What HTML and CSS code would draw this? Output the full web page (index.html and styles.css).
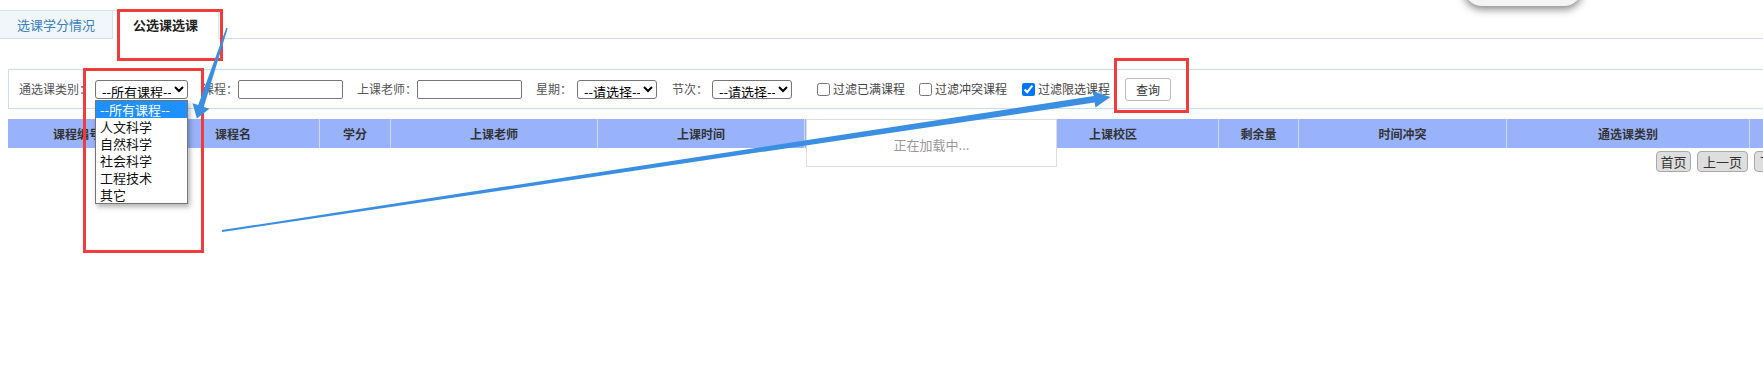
FILE: index.html
```html
<!DOCTYPE html>
<html lang="zh-CN">
<head>
<meta charset="utf-8">
<title>公选课选课</title>
<link rel="stylesheet" href="styles.css">
</head>
<body>
<div class="tabbar">
  <div class="tab">选课学分情况</div>
  <div class="tab active">公选课选课</div>
</div>

<div class="main">
  <div class="filter">
    <span class="lbl">通选课类别：</span>
    <span class="sel-wrap">
      <select class="sel sel-type"><option>--所有课程--</option></select>
      <ul class="dropdown">
        <li class="on">--所有课程--</li>
        <li>人文科学</li>
        <li>自然科学</li>
        <li>社会科学</li>
        <li>工程技术</li>
        <li>其它</li>
      </ul>
    </span>
    <span class="lbl lbl-course">课程：</span><input class="txt" type="text">
    <span class="lbl lbl-teacher">上课老师：</span><input class="txt" type="text">
    <span class="lbl lbl-week">星期：</span><select class="sel sel-sm sel-week"><option>--请选择--</option></select>
    <span class="lbl lbl-sec">节次：</span><select class="sel sel-sm sel-sec"><option>--请选择--</option></select>
    <label class="chk chk-1"><input type="checkbox">过滤已满课程</label>
    <label class="chk chk-2"><input type="checkbox">过滤冲突课程</label>
    <label class="chk chk-3"><input type="checkbox" checked>过滤限选课程</label>
    <button class="btn" type="button">查询</button>
  </div>

  <div class="grid-wrap">
    <div class="grid-head">
      <div class="th c1">课程编号</div>
      <div class="th c2">课程名</div>
      <div class="th c3">学分</div>
      <div class="th c4">上课老师</div>
      <div class="th c5">上课时间</div>
      <div class="th c6"></div>
      <div class="th c7">上课校区</div>
      <div class="th c8">剩余量</div>
      <div class="th c9">时间冲突</div>
      <div class="th c10">通选课类别</div>
      <div class="th c11">操作</div>
    </div>
    <div class="loading">正在加载中...</div>
  </div>

  <div class="pager">
    <button class="pbtn w2" type="button">首页</button>
    <button class="pbtn w3" type="button">上一页</button>
    <button class="pbtn w3" type="button">下一页</button>
    <button class="pbtn w2" type="button">尾页</button>
  </div>
</div>

<div class="float-widget"><span class="fw-circle"></span></div>

<div class="mark mark-1"></div>
<div class="mark mark-2"></div>
<div class="mark mark-3"></div>

<svg class="arrows" width="1763" height="389" viewBox="0 0 1763 389" xmlns="http://www.w3.org/2000/svg">
  <polygon fill="#3b8fe2" points="227.7,28.2 226.3,27.8 198.2,105.1 192.5,103.2 196.9,118.6 209.5,108.8 203.8,107"/>
  <polygon fill="#3b8fe2" points="222.1,231.9 221.9,230.1 1093.8,96.1 1092.8,91.2 1110.5,97 1095.5,107.6 1094.6,102.6"/>
</svg>
</body>
</html>
```

FILE: styles.css
```css
html, body {
  margin: 0;
  padding: 0;
  background: #fff;
  overflow: hidden;
}
body {
  position: relative;
  width: 1763px;
  height: 389px;
  font-family: "Noto Sans CJK SC", "Microsoft YaHei", sans-serif;
  font-size: 12px;
  color: #333;
}

/* tabs */
.tabbar {
  display: flex;
  align-items: flex-end;
  height: 38px;
  border-bottom: 1px solid #c8ddef;
  box-sizing: content-box;
}
.tab {
  box-sizing: border-box;
  height: 28px;
  line-height: 27px;
  font-size: 13px;
  text-align: center;
}
.tab:first-child {
  width: 113px;
  background: #f1f6fb;
  color: #3b7fc0;
  border-top: 1px solid #d7e5f1;
  border-right: 1px solid #d7e5f1;
}
.tab.active {
  width: 106px;
  height: 29px;
  margin-bottom: -1px;
  background: #fff;
  color: #222;
  font-weight: bold;
  border-top: 1px solid #d7e5f1;
  border-right: 1px solid #d7e5f1;
}

/* main */
.main {
  width: 1838px;
  margin: 30px 0 0 8px;
}

.filter {
  display: flex;
  align-items: center;
  box-sizing: border-box;
  height: 40px;
  padding-left: 10px;
  border: 1px solid #c8def0;
  white-space: nowrap;
}
.lbl {
  color: #555;
  font-size: 12px;
  line-height: 16px;
}
.sel-wrap {
  position: relative;
  margin-left: 4px;
  display: flex;
}
.sel {
  box-sizing: border-box;
  height: 19px;
  font-family: "Noto Sans CJK SC", sans-serif;
  font-size: 13px;
  line-height: 15px;
  color: #000;
  border: 1px solid #767676;
  border-radius: 3px;
  background: #fff;
  padding: 0 0 0 2px;
  margin: 0;
}
.sel-type { width: 93px; }
.sel-sm { width: 80px; }
.sel-week { margin-left: 5px; }
.sel-sec { margin-left: 4px; }

.dropdown {
  position: absolute;
  left: 0;
  top: 20px;
  width: 93px;
  margin: 0;
  padding: 0;
  list-style: none;
  box-sizing: border-box;
  background: #fff;
  border: 1px solid #767676;
  box-shadow: 2px 3px 5px rgba(0, 0, 0, 0.3);
  z-index: 5;
}
.dropdown li {
  height: 17px;
  line-height: 17px;
  padding-left: 4px;
  font-size: 13px;
  color: #111;
}
.dropdown li.on {
  background: #1e90ff;
  color: #fff;
}

.lbl-course { margin-left: 14px; }
.lbl-teacher { margin-left: 14px; }
.lbl-week { margin-left: 14px; }
.lbl-sec { margin-left: 15px; }

.txt {
  box-sizing: border-box;
  width: 105px;
  height: 19px;
  margin: 0;
  padding: 0 3px;
  border: 1px solid #767676;
  border-radius: 2px;
  background: #fff;
}

.chk {
  display: flex;
  align-items: center;
  color: #444;
  font-size: 12px;
  line-height: 16px;
}
.chk input {
  width: 13px;
  height: 13px;
  margin: 0 3px 0 0;
}
.chk-1 { margin-left: 25px; }
.chk-2 { margin-left: 14px; }
.chk-3 { margin-left: 15px; }

.btn {
  box-sizing: border-box;
  width: 46px;
  height: 23px;
  margin-left: 15px;
  padding: 0;
  font-family: "Noto Sans CJK SC", sans-serif;
  font-size: 12px;
  color: #333;
  background: #fff;
  border: 1px solid #bbb;
  border-radius: 3px;
}

/* grid */
.grid-wrap {
  position: relative;
  margin-top: 10px;
}
.grid-head {
  display: flex;
  height: 29px;
  background: #98b3fc;
}
.th {
  box-sizing: border-box;
  flex: none;
  border-left: 1px solid #d3dbee;
  font-weight: bold;
  font-size: 12px;
  line-height: 29px;
  text-align: center;
  color: #333;
}
.th.c1 { width: 138px; border-left: 0; }
.th.c2 { width: 173px; }
.th.c3 { width: 71px; }
.th.c4 { width: 207px; }
.th.c5 { width: 207px; }
.th.c6 { width: 203px; }
.th.c7 { width: 211px; }
.th.c8 { width: 80px; }
.th.c9 { width: 208px; }
.th.c10 { width: 243px; }
.th.c11 { width: 97px; }

.loading {
  position: absolute;
  left: 798px;
  top: 0;
  box-sizing: border-box;
  width: 251px;
  height: 48px;
  padding-top: 3px;
  background: #fff;
  border: 1px solid #ddd;
  color: #999;
  font-size: 13px;
  display: flex;
  align-items: center;
  justify-content: center;
}

.pager {
  display: flex;
  justify-content: flex-end;
  gap: 6px;
  margin-top: 3px;
}
.pbtn {
  box-sizing: border-box;
  height: 21px;
  padding: 0;
  font-family: "Noto Sans CJK SC", sans-serif;
  font-size: 13px;
  line-height: 19px;
  color: #333;
  background: #dedede;
  border: 1px solid #a9a9a9;
  border-radius: 4px;
}
.pbtn.w2 { width: 35px; }
.pbtn.w3 { width: 51px; }

/* floating widget at the top edge */
.float-widget {
  position: absolute;
  left: 1464px;
  top: -31px;
  width: 118px;
  height: 37px;
  border-radius: 18px;
  background: #f4f4f4;
  box-shadow: 0 3px 8px rgba(0, 0, 0, 0.5);
}
.fw-circle {
  position: absolute;
  left: 9px;
  top: 7px;
  width: 24px;
  height: 24px;
  box-sizing: border-box;
  border: 2px solid #9a9a9a;
  border-radius: 50%;
  background: #fff;
}

/* annotation marks */
.mark {
  position: absolute;
  box-sizing: border-box;
  border: 3px solid #f23b3b;
  z-index: 10;
}
.mark-1 { left: 117px; top: 9px; width: 106px; height: 52px; }
.mark-2 { left: 83px; top: 68px; width: 121px; height: 185px; }
.mark-3 { left: 1114px; top: 58px; width: 75px; height: 55px; }

.arrows {
  position: absolute;
  left: 0;
  top: 0;
  z-index: 11;
  pointer-events: none;
}
```
